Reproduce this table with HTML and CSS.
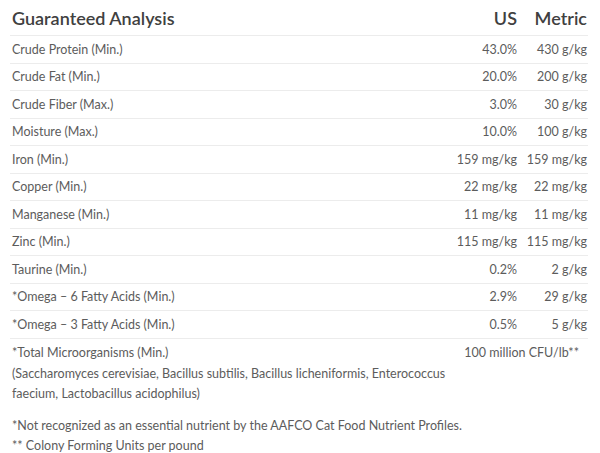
FILE: index.html
```html
<!DOCTYPE html>
<html>
<head>
<meta charset="utf-8">
<link rel="stylesheet" href="styles.css">
</head>
<body>
<div class="wrap">
  <table class="ga">
    <thead>
      <tr class="head">
        <th class="name">Guaranteed Analysis</th>
        <th class="us">US</th>
        <th class="metric">Metric</th>
      </tr>
    </thead>
    <tbody>
      <tr><td class="name">Crude Protein (Min.)</td><td class="us">43.0%</td><td class="metric">430 g/kg</td></tr>
      <tr><td class="name">Crude Fat (Min.)</td><td class="us">20.0%</td><td class="metric">200 g/kg</td></tr>
      <tr><td class="name">Crude Fiber (Max.)</td><td class="us">3.0%</td><td class="metric">30 g/kg</td></tr>
      <tr><td class="name">Moisture (Max.)</td><td class="us">10.0%</td><td class="metric">100 g/kg</td></tr>
      <tr><td class="name">Iron (Min.)</td><td class="us">159 mg/kg</td><td class="metric">159 mg/kg</td></tr>
      <tr><td class="name">Copper (Min.)</td><td class="us">22 mg/kg</td><td class="metric">22 mg/kg</td></tr>
      <tr><td class="name">Manganese (Min.)</td><td class="us">11 mg/kg</td><td class="metric">11 mg/kg</td></tr>
      <tr><td class="name">Zinc (Min.)</td><td class="us">115 mg/kg</td><td class="metric">115 mg/kg</td></tr>
      <tr><td class="name">Taurine (Min.)</td><td class="us">0.2%</td><td class="metric">2 g/kg</td></tr>
      <tr><td class="name">*Omega – 6 Fatty Acids (Min.)</td><td class="us">2.9%</td><td class="metric">29 g/kg</td></tr>
      <tr><td class="name">*Omega – 3 Fatty Acids (Min.)</td><td class="us">0.5%</td><td class="metric">5 g/kg</td></tr>
      <tr class="last">
        <td class="name">
          <div class="lbl">*Total Microorganisms (Min.)</div>
          <div class="sub">(Saccharomyces cerevisiae, Bacillus subtilis, Bacillus licheniformis, Enterococcus faecium, Lactobacillus acidophilus)</div>
        </td>
        <td class="cfu" colspan="2">100 million CFU/lb**</td>
      </tr>
    </tbody>
  </table>
  <div class="notes">
    <p>*Not recognized as an essential nutrient by the AAFCO Cat Food Nutrient Profiles.</p>
    <p>** Colony Forming Units per pound</p>
  </div>
</div>
</body>
</html>
```
FILE: styles.css
```css
html, body {
  margin: 0;
  padding: 0;
  background: #fff;
}
body {
  font-family: "Lato", "Open Sans", sans-serif;
  color: #5c5c5c;
  font-size: 12.5px;
}
.wrap {
  width: 576px;
  padding-left: 10px;
}
.ga {
  width: 100%;
  border-collapse: collapse;
  table-layout: fixed;
}
.ga th, .ga td {
  padding: 0;
  vertical-align: middle;
}
.ga .name { width: 434px; text-align: left; padding-left: 2px; }
.ga .us { width: 71px; text-align: right; }
.ga .metric { width: 70px; text-align: right; padding-right: 1px; }
.head th {
  height: 34px;
  font-size: 18px;
  font-weight: 600;
  color: #404040;
  padding-top: 1px;
  padding-bottom: 0;
  border-bottom: 1px solid #ececec;
}
.ga tbody tr td {
  height: 26.5px;
  border-bottom: 1px solid #ececec;
}
.ga tbody tr.last td {
  border-bottom: none;
  vertical-align: top;
  padding-top: 4px;
}
.lbl { line-height: 19.5px; }
.sub { line-height: 19.5px; margin-top: 2px; }
.ga .cfu {
  text-align: right;
  padding-right: 9px;
  line-height: 19.5px;
}
.notes {
  margin-top: 13px;
  padding-left: 2px;
}
.notes p {
  margin: 0;
  line-height: 19.5px;
}
```
